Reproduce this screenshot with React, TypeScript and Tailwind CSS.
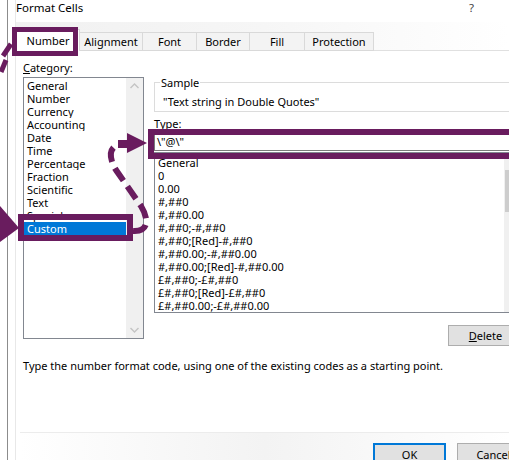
import React from "react";

const categories = [
  "General",
  "Number",
  "Currency",
  "Accounting",
  "Date",
  "Time",
  "Percentage",
  "Fraction",
  "Scientific",
  "Text",
  "Special",
  "Custom",
];

const formats = [
  "General",
  "0",
  "0.00",
  "#,##0",
  "#,##0.00",
  "#,##0;-#,##0",
  "#,##0;[Red]-#,##0",
  "#,##0.00;-#,##0.00",
  "#,##0.00;[Red]-#,##0.00",
  "£#,##0;-£#,##0",
  "£#,##0;[Red]-£#,##0",
  "£#,##0.00;-£#,##0.00",
];

const tabs = [
  { label: "Number", w: "w-[64px]" },
  { label: "Alignment", w: "w-[63px]" },
  { label: "Font", w: "w-[54px]" },
  { label: "Border", w: "w-[53px]" },
  { label: "Fill", w: "w-[55px]" },
  { label: "Protection", w: "w-[69px]" },
];

function Chevron({ up }: { up?: boolean }) {
  return (
    <svg width="9" height="6" viewBox="0 0 9 6">
      <path
        d={up ? "M0.5 5 L4.5 1 L8.5 5" : "M0.5 1 L4.5 5 L8.5 1"}
        fill="none"
        stroke="#c4c4c4"
        strokeWidth="1.4"
      />
    </svg>
  );
}

// purple hand-drawn annotations sitting over the dialog
function Annotations() {
  const c = "#691c5e";
  return (
    <svg className="absolute inset-0 pointer-events-none" width="509" height="460" viewBox="0 0 509 460">
      <rect x="14.5" y="29.5" width="61" height="24" fill="none" stroke={c} strokeWidth="5" />
      <rect x="21" y="217" width="109" height="21" fill="none" stroke={c} strokeWidth="6" />
      <rect x="151" y="132" width="400" height="24" fill="none" stroke={c} strokeWidth="6" />
      <path d="M11 44 L3 56" stroke={c} strokeWidth="5" />
      <path d="M6 60 L1 72" stroke={c} strokeWidth="5" />
      <polygon points="0,206 19,228 0,242" fill={c} />
      <path
        d="M133 231 C149 232, 149 219, 141 206 L116 170 C108 157, 109 146, 121 144"
        fill="none"
        stroke={c}
        strokeWidth="6"
        strokeDasharray="15 7"
      />
      <polygon points="118,140 127,140 127,133 147,143 127,153 127,148 118,148" fill={c} />
    </svg>
  );
}

export default function App() {
  return (
    <div className="relative w-[509px] h-[460px] overflow-hidden bg-white text-black text-[11px] leading-[13px] font-['Noto_Sans',sans-serif]">
      <div className="flex h-full">
        <div className="w-[7px] shrink-0" />
        <div className="flex-1 min-w-0 flex border-l border-[#8c8c8c]">
          <div className="w-[7px] shrink-0" />
          <div className="flex-1 min-w-0 flex flex-col border-l border-[#e8e8e8]">
            {/* title */}
            <div className="h-[22px] shrink-0 flex items-start justify-between pt-[1px] pr-[35px] text-[11.5px]">
              <span>Format Cells</span>
              <span className="text-[#444]">?</span>
            </div>

            {/* tabs */}
            <div className="h-[29px] shrink-0 flex items-end bg-gradient-to-r from-[#f1f1f1] via-[#f6f6f6] to-white">
              {tabs.map((t, i) =>
                i === 0 ? (
                  <div
                    key={t.label}
                    className={`${t.w} shrink-0 h-[22px] flex items-center justify-center bg-white border-x border-t border-[#d9d9d9]`}
                  >
                    {t.label}
                  </div>
                ) : (
                  <div
                    key={t.label}
                    className={`${t.w} shrink-0 h-[19px] flex items-center justify-center bg-[#f3f3f3] border-r border-t border-b border-[#d9d9d9]`}
                  >
                    {t.label}
                  </div>
                )
              )}
              <div className="flex-1 border-b border-[#e0e0e0]" />
            </div>

            {/* tab page */}
            <div className="shrink-0 flex pl-[7px] pt-[10px]">
              <div className="w-[121px] shrink-0 flex flex-col">
                <div className="h-[13px]">
                  <span className="underline underline-offset-1">C</span>ategory:
                </div>
                <div className="mt-[3px] h-[262px] border border-[#828790] flex">
                  <div className="flex-1 pt-[1px] flex flex-col">
                    {categories.map((c) =>
                      c === "Custom" ? (
                        <div key={c} className="h-[13px] shrink-0 pl-[3px] bg-[#0078d7] text-white">
                          {c}
                        </div>
                      ) : (
                        <div key={c} className="h-[13px] shrink-0 pl-[3px] overflow-hidden">
                          {c}
                        </div>
                      )
                    )}
                  </div>
                  <div className="w-[17px] shrink-0 bg-[#f0f0f0] flex flex-col justify-between items-center py-[5px]">
                    <Chevron up />
                    <Chevron />
                  </div>
                </div>
              </div>

              <div className="ml-[10px] flex-1 min-w-0 flex flex-col">
                <fieldset className="mt-[15px] w-[380px] shrink-0 border border-[#dcdcdc] pt-[6px] pb-[3px]">
                  <legend className="ml-[5px] px-[1px] leading-[13px]">Sample</legend>
                  <div className="h-[13px] pl-[8px]">"Text string in Double Quotes"</div>
                </fieldset>
                <div className="mt-[5px] h-[13px]">Type:</div>
                <div className="mt-[1px] w-[368px] shrink-0 h-[20px] border border-[#7a7a7a] flex items-center pl-[2px]">
                  \"@\"
                </div>
                <div className="mt-[1px] w-[368px] shrink-0 h-[161px] border border-[#828790] flex">
                  <div className="flex-1 pt-[3px] pl-[3px] flex flex-col">
                    {formats.map((f) => (
                      <div key={f} className="h-[13px] shrink-0 whitespace-nowrap">
                        {f}
                      </div>
                    ))}
                  </div>
                  <div className="w-[17px] shrink-0 bg-[#f0f0f0] pt-[17px]">
                    <div className="h-[42px] bg-[#cdcdcd] mx-[1px]" />
                  </div>
                </div>
                <div className="mt-[12px] ml-[294px] w-[75px] shrink-0 h-[21px] border border-[#adadad] bg-[#e1e1e1] flex items-center justify-center">
                  <span>
                    <span className="underline underline-offset-1">D</span>elete
                  </span>
                </div>
              </div>
            </div>

            <div className="shrink-0 mt-[13px] pl-[7px] h-[13px] whitespace-nowrap">
              Type the number format code, using one of the existing codes as a starting point.
            </div>

            <div className="shrink-0 h-[40px] mt-[60px] ml-[4px] border-t border-[#ececec] flex gap-[11px] pl-[353px] pt-[10px] bg-gradient-to-r from-white via-[#f3f3f3] to-white">
              <div className="w-[73px] shrink-0 h-[23px] border-2 border-[#0078d7] bg-[#e1e1e1] flex items-center justify-center">
                OK
              </div>
              <div className="w-[73px] h-[23px] border border-[#adadad] bg-[#e1e1e1] flex items-center justify-center shrink-0">
                Cancel
              </div>
            </div>
          </div>
        </div>
      </div>
      <Annotations />
    </div>
  );
}
